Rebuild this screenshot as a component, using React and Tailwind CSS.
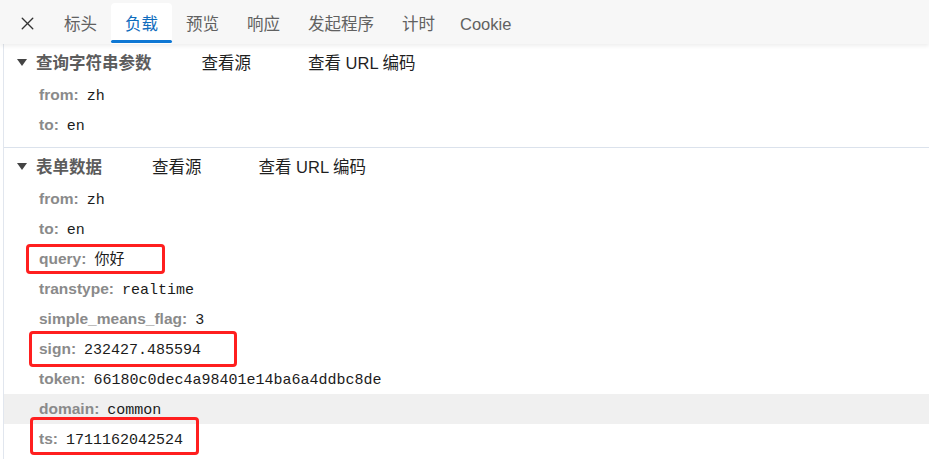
import { X } from "lucide-react";

const tabs = ["标头", "负载", "预览", "响应", "发起程序", "计时", "Cookie"];

const queryParams = [
  { key: "from", value: "zh" },
  { key: "to", value: "en" },
];

const formData = [
  { key: "from", value: "zh" },
  { key: "to", value: "en" },
  { key: "query", value: "你好", box: "left-[22px] top-0 w-[139px] h-[30px]" },
  { key: "transtype", value: "realtime" },
  { key: "simple_means_flag", value: "3" },
  { key: "sign", value: "232427.485594", box: "left-[25px] -top-[3px] w-[208px] h-[36px]" },
  { key: "token", value: "66180c0dec4a98401e14ba6a4ddbc8de" },
  { key: "domain", value: "common", hover: true },
  { key: "ts", value: "1711162042524", box: "left-[26px] -top-[7px] w-[169px] h-[38px]" },
];

const Row = ({ item }) => (
  <div
    className={`relative flex items-baseline h-[30px] pt-[1px] pl-[35px] leading-[28px] ${
      item.hover ? "bg-[#f0f0f0]" : ""
    }`}
  >
    <span className="font-bold text-[15.5px] text-[#8a8a8a]">{item.key}:</span>
    <span className="ml-[8px] text-[15px] text-[#1b1b1b] font-['Liberation_Mono','Noto_Sans_CJK_SC',monospace]">
      {item.value}
    </span>
    {item.box && (
      <div
        className={`absolute ${item.box} border-[3px] border-[#ff1f1f] rounded-[4px]`}
      />
    )}
  </div>
);

const SectionHeader = ({ title }) => (
  <div className="flex items-center h-[36px] pt-[2px] pl-[13px] text-[16.5px]">
    <svg width="10" height="8" viewBox="0 0 10 8" className="mr-[9px]">
      <path d="M0 0 L10 0 L5 7 Z" fill="#444" />
    </svg>
    <span className="font-bold text-[#5c5c5c]">{title}</span>
    <span className="ml-[50px] text-[#1f1f1f]">查看源</span>
    <span className="ml-[57px] text-[#1f1f1f]">查看 URL 编码</span>
  </div>
);

export default function App() {
  return (
    <div className="w-[929px] h-[459px] overflow-hidden bg-white font-['Liberation_Sans','Noto_Sans_CJK_SC',sans-serif]">
      {/* tab bar */}
      <div className="relative z-10 flex h-[44px] pt-[3px] bg-[#f7f7f7] shadow-[0_2px_4px_rgba(0,0,0,0.07)]">
        <div className="flex items-center w-[50px] pl-[17px]">
          <X size={21} strokeWidth={1.6} color="#333" />
        </div>
        {tabs.map((tab, i) => (
          <div
            key={tab}
            className={`relative flex items-center px-[14px] pt-[1px] text-[16.5px] ${
              i === 1
                ? "bg-white rounded-t-[4px] text-[#0f6cbd]"
                : "text-[#616161]"
            } ${tab === "Cookie" ? "pl-[11px]" : ""}`}
          >
            {tab}
            {i === 1 && (
              <div className="absolute left-0 right-0 bottom-[1px] h-[3px] rounded-full bg-[#0f78d4]" />
            )}
          </div>
        ))}
      </div>

      <div className="ml-[3px] h-full border-l border-[#e1e6ee]">
        <div className="pb-[7px] border-b border-[#dbe2ec]">
          <SectionHeader title="查询字符串参数" />
          {queryParams.map((item) => (
            <Row key={item.key} item={item} />
          ))}
        </div>
        <div>
          <SectionHeader title="表单数据" />
          {formData.map((item) => (
            <Row key={item.key} item={item} />
          ))}
        </div>
      </div>
    </div>
  );
}
